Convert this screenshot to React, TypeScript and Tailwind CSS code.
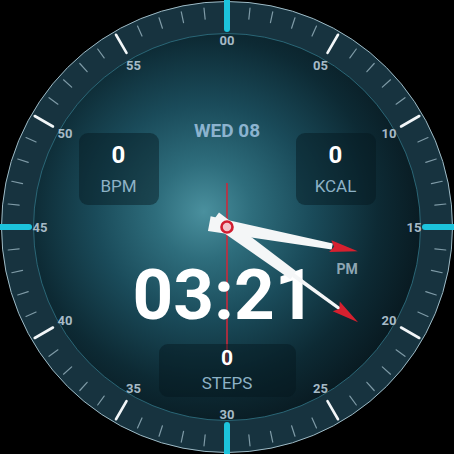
const C = 227;

const polar = (r: number, deg: number) => {
  const a = (deg * Math.PI) / 180;
  return [C + r * Math.sin(a), C - r * Math.cos(a)];
};

function Bezel() {
  const ticks = Array.from({ length: 60 }, (_, i) => i);
  return (
    <svg className="absolute inset-0" width={454} height={454} viewBox="0 0 454 454">
      {ticks.map((i) => {
        const deg = i * 6;
        if (i % 15 === 0) {
          const [x1, y1] = polar(198, deg);
          const [x2, y2] = polar(232, deg);
          return <line key={i} x1={x1} y1={y1} x2={x2} y2={y2} stroke="#1cc3dc" strokeWidth={6} strokeLinecap="round" />;
        }
        if (i % 5 === 0) {
          const [x1, y1] = polar(201, deg);
          const [x2, y2] = polar(222, deg);
          return <line key={i} x1={x1} y1={y1} x2={x2} y2={y2} stroke="#f2f6f8" strokeWidth={2.6} strokeLinecap="round" />;
        }
        const [x1, y1] = polar(209, deg);
        const [x2, y2] = polar(220, deg);
        return <line key={i} x1={x1} y1={y1} x2={x2} y2={y2} stroke="#7f9ba7" strokeWidth={1.2} strokeLinecap="round" />;
      })}
      {Array.from({ length: 12 }, (_, i) => i).map((i) => {
        const [x, y] = polar(187, i * 30);
        return (
          <text
            key={i}
            x={x}
            y={y}
            textAnchor="middle"
            dominantBaseline="central"
            fill="#a6bac6"
            fontSize={13}
            fontWeight={700}
            fontFamily="Roboto, 'Liberation Sans', sans-serif"
          >
            {String(i * 5).padStart(2, '0')}
          </text>
        );
      })}
    </svg>
  );
}

function SecondHand() {
  return (
    <svg className="absolute inset-0" width={454} height={454} viewBox="0 0 454 454">
      <line x1={C} y1={183} x2={C} y2={366} stroke="#c92a3c" strokeWidth={1.6} />
    </svg>
  );
}

function Hands() {
  const hour = 100.5;
  const minute = 126;
  return (
    <svg className="absolute inset-0 pointer-events-none" width={454} height={454} viewBox="0 0 454 454">
      <g transform={`rotate(${minute} ${C} ${C})`}>
        <polygon points={`${C - 7},${C + 15} ${C + 7},${C + 15} ${C + 5},${C - 82} ${C - 5},${C - 82}`} fill="#f4f6f7" />
        <polygon points={`${C - 2},${C - 82} ${C + 2},${C - 82} ${C + 1.6},${C - 140} ${C - 1.6},${C - 140}`} fill="#f4f6f7" />
        <polygon points={`${C},${C - 162} ${C + 6},${C - 135} ${C},${C - 139} ${C - 6},${C - 135}`} fill="#d7202f" />
      </g>
      <g transform={`rotate(${hour} ${C} ${C})`}>
        <polygon points={`${C - 7.5},${C + 18} ${C + 7.5},${C + 18} ${C + 3},${C - 107} ${C - 3},${C - 107}`} fill="#f4f6f7" />
        <polygon points={`${C},${C - 133} ${C + 6},${C - 105} ${C},${C - 109} ${C - 6},${C - 105}`} fill="#d7202f" />
      </g>
      <circle cx={C} cy={C} r={5.5} fill="#f3c4cb" stroke="#d21e31" strokeWidth={2.6} />
    </svg>
  );
}

function Stat({ value, label }: { value: string; label: string }) {
  return (
    <div className="w-[80px] h-[72px] mt-[12px] rounded-[9px] bg-[#05161d]/45 flex flex-col items-center pt-[10px]">
      <span className="text-[24px] leading-[24px] font-bold text-white">{value}</span>
      <span className="mt-[9px] text-[17px] leading-[20px] text-[#8db2c6]">{label}</span>
    </div>
  );
}

export default function App() {
  return (
    <div className="relative w-[454px] h-[454px] bg-black overflow-hidden font-['Roboto','Liberation_Sans',sans-serif]">
      <div className="absolute left-[1px] top-[1px] w-[452px] h-[452px] rounded-full bg-[#17333f] border-[1.5px] border-[#9ebbc6]" />
      <div className="absolute left-[33px] top-[33px] w-[388px] h-[388px] rounded-full border-[1.5px] border-[#2a6676] bg-[radial-gradient(circle_at_44%_46%,#4a909e_0%,#2e6d7c_16%,#1a4b5a_36%,#0d2a34_58%,#07141a_80%,#050d12_100%)]" />
      <Bezel />
      <SecondHand />

      <div className="absolute inset-0 flex flex-col items-center pt-[121px]">
        <div className="flex items-start justify-between w-[297px]">
          <Stat value="0" label="BPM" />
          <span className="text-[19px] leading-[20px] font-bold text-[#8cb3cf]">WED 08</span>
          <Stat value="0" label="KCAL" />
        </div>

        <div className="relative mt-[55px] -translate-x-[3px]">
          <span className="block text-[71px] leading-[70px] font-bold text-white">03:21</span>
          <span className="absolute left-full top-[1px] ml-[21px] text-[14px] leading-[16px] font-bold text-[#8ea6b3]">PM</span>
        </div>

        <div className="mt-[14px] w-[137px] h-[53px] rounded-[9px] bg-[#05161d]/45 flex flex-col items-center pt-[4px]">
          <span className="text-[21px] leading-[21px] font-bold text-white">0</span>
          <span className="mt-[4px] text-[17px] leading-[20px] text-[#8db2c6]">STEPS</span>
        </div>
      </div>

      <Hands />
    </div>
  );
}
